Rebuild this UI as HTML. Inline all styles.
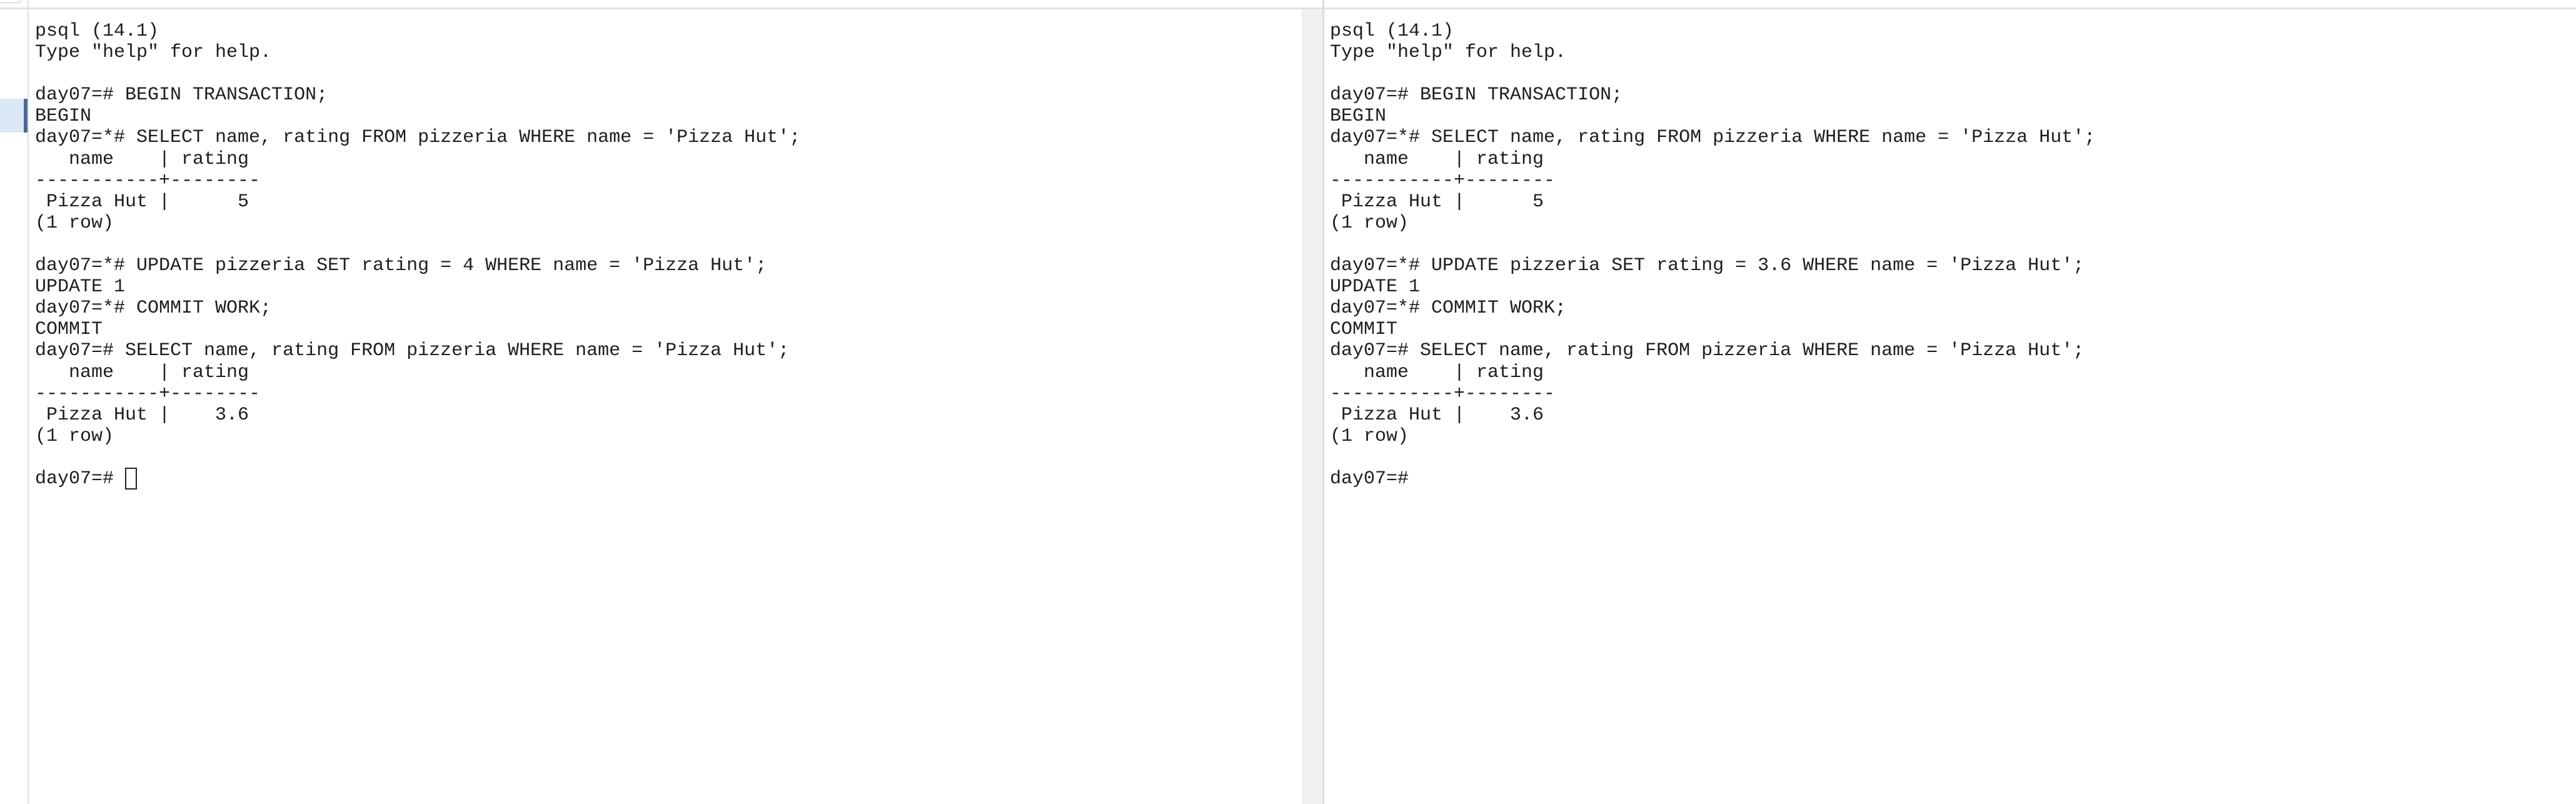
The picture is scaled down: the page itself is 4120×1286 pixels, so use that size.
<!DOCTYPE html>
<html><head><meta charset="utf-8"><style>
html,body{margin:0;padding:0;width:4120px;height:1286px;overflow:hidden;background:#fff;position:relative}
.abs{position:absolute}
pre{position:absolute;margin:0;font-family:"Liberation Mono",monospace;font-size:30px;line-height:34.1px;color:#1e1e1e;white-space:pre}
</style></head><body>
<div class="abs" style="left:0;top:12px;width:4120px;height:3px;background:#e0e0e5"></div>
<div class="abs" style="left:0;top:-4px;width:34px;height:8px;border:1.5px solid #c9c9cf;border-radius:0 0 6px 0;border-left:none;border-top:none"></div>
<div class="abs" style="left:44px;top:0;width:2px;height:1286px;background:#e0e0e5"></div>
<div class="abs" style="left:0;top:158px;width:39px;height:54px;background:#dbe9f6"></div>
<div class="abs" style="left:38px;top:158px;width:6px;height:54px;background:#4c6b94"></div>
<div class="abs" style="left:2082px;top:15px;width:33px;height:1271px;background:#f0f0f3"></div>
<div class="abs" style="left:2115px;top:0;width:3px;height:1286px;background:#dddde2"></div>
<pre style="left:56px;top:33px">psql (14.1)
Type "help" for help.

day07=# BEGIN TRANSACTION;
BEGIN
day07=*# SELECT name, rating FROM pizzeria WHERE name = 'Pizza Hut';
   name    | rating
-----------+--------
 Pizza Hut |      5
(1 row)

day07=*# UPDATE pizzeria SET rating = 4 WHERE name = 'Pizza Hut';
UPDATE 1
day07=*# COMMIT WORK;
COMMIT
day07=# SELECT name, rating FROM pizzeria WHERE name = 'Pizza Hut';
   name    | rating
-----------+--------
 Pizza Hut |    3.6
(1 row)

day07=# </pre>
<div class="abs" style="left:200px;top:748px;width:15px;height:31px;border:2px solid #222"></div>
<pre style="left:2127px;top:33px">psql (14.1)
Type "help" for help.

day07=# BEGIN TRANSACTION;
BEGIN
day07=*# SELECT name, rating FROM pizzeria WHERE name = 'Pizza Hut';
   name    | rating
-----------+--------
 Pizza Hut |      5
(1 row)

day07=*# UPDATE pizzeria SET rating = 3.6 WHERE name = 'Pizza Hut';
UPDATE 1
day07=*# COMMIT WORK;
COMMIT
day07=# SELECT name, rating FROM pizzeria WHERE name = 'Pizza Hut';
   name    | rating
-----------+--------
 Pizza Hut |    3.6
(1 row)

day07=#</pre>
</body></html>
